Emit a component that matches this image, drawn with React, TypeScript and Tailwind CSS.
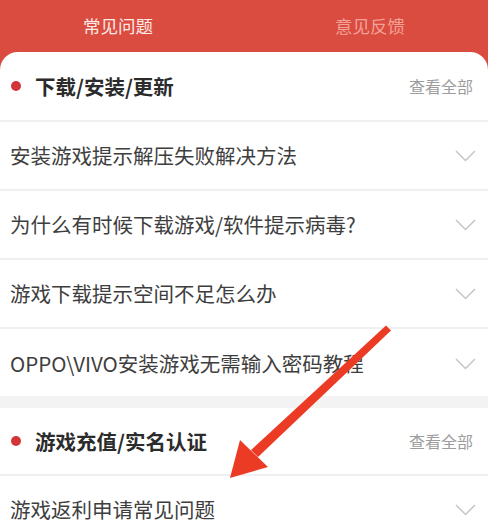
import React from 'react';

const font = { fontFamily: '"Noto Sans CJK SC", "Noto Sans", sans-serif' };

function Chevron() {
  return (
    <svg width="21" height="12" viewBox="0 0 21 12" fill="none">
      <polyline points="1,1 10.5,10.5 20,1" stroke="#c6c6c6" strokeWidth="1.5" strokeLinejoin="round" />
    </svg>
  );
}

function SectionHead({ title, h }: { title: string; h: string }) {
  return (
    <div className={`flex items-center justify-between pl-[11px] pr-[15px] border-b-2 border-[#f1f0f0] ${h}`}>
      <div className="flex items-center gap-[14px]">
        <span className="w-[10px] h-[10px] rounded-full bg-[#d2363b]"></span>
        <span className="text-[20.5px] font-bold text-[#2b2b2b] leading-none">{title}</span>
      </div>
      <span className="text-[16px] text-[#9d9d9d] leading-none">查看全部</span>
    </div>
  );
}

function Row({ text, last }: { text: string; last?: boolean }) {
  return (
    <div
      className={`flex items-center justify-between pl-[10px] pr-[12px] ${
        last ? 'h-[67px] pt-[2px]' : 'h-[69px] border-b-2 border-[#f1f0f0]'
      }`}
    >
      <span className="text-[20.5px] text-[#3e3e3e] leading-none">{text}</span>
      <Chevron />
    </div>
  );
}

export default function App() {
  return (
    <div className="relative w-[488px] h-[523px] overflow-hidden bg-[#f3f3f3]" style={font}>
      <div className="bg-[#db4c40]">
        <div className="flex h-[52px] items-center">
          <div className="flex-1 text-center text-[17.5px] text-[#fbe9e5] pr-[16px]">常见问题</div>
          <div className="flex-1 text-center text-[17.5px] text-[#f2a297]">意见反馈</div>
        </div>
        <div className="bg-white rounded-t-[18px]">
          <SectionHead title="下载/安装/更新" h="h-[70px]" />
          <Row text="安装游戏提示解压失败解决方法" />
          <Row text="为什么有时候下载游戏/软件提示病毒?" />
          <Row text="游戏下载提示空间不足怎么办" />
          <Row text="OPPO\VIVO安装游戏无需输入密码教程" last />
        </div>
      </div>
      <div className="mt-[12px] bg-white">
        <SectionHead title="游戏充值/实名认证" h="h-[68px]" />
        <Row text="游戏返利申请常见问题" />
      </div>

      <svg className="absolute left-0 top-0 pointer-events-none" width="488" height="523" viewBox="0 0 488 523">
        <polygon points="386,325.5 391,330.5 258,457 251,450" fill="#ec3b25" />
        <polygon points="230,478 240,440 268,467" fill="#ec3b25" />
      </svg>
    </div>
  );
}
